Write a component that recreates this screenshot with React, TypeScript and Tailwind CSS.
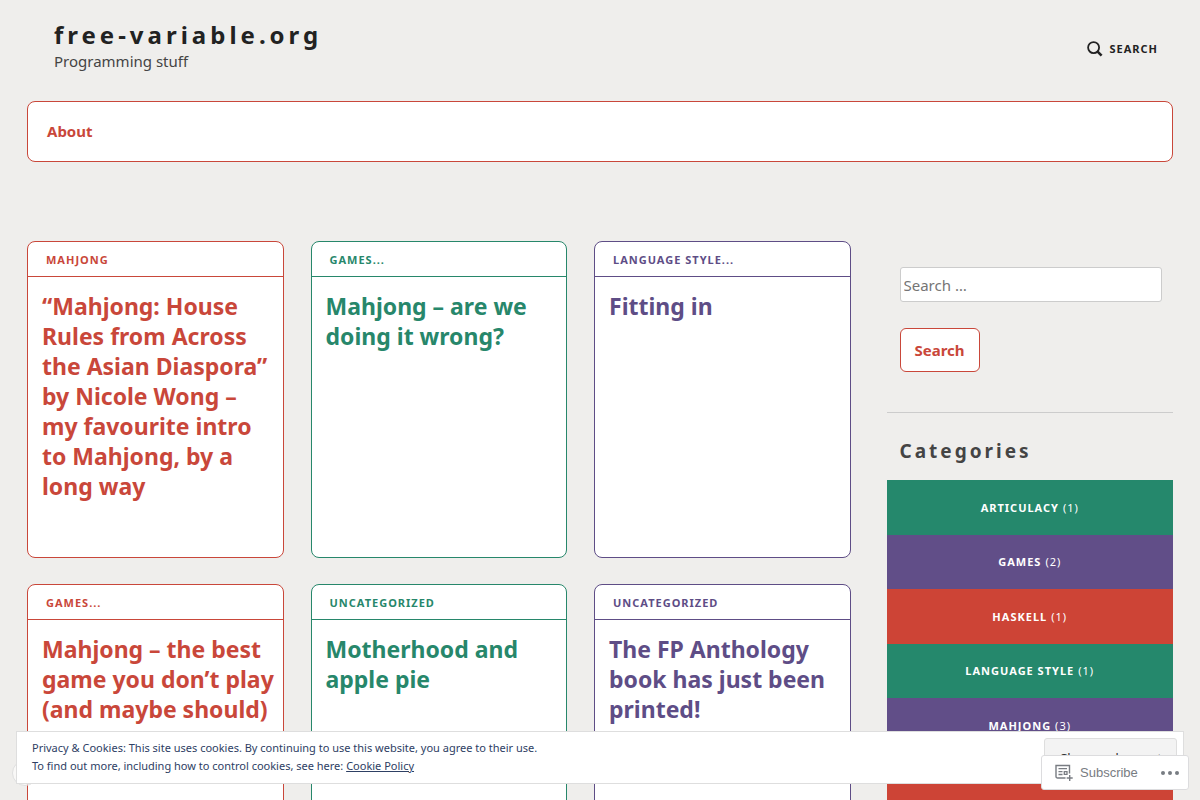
import clsx from 'clsx';

type Tone = 'red' | 'green' | 'purple';

const textTone: Record<Tone, string> = {
  red: 'text-[#c9473a]',
  green: 'text-[#27876b]',
  purple: 'text-[#5e4d86]',
};

const borderTone: Record<Tone, string> = {
  red: 'border-[#c9473a]',
  green: 'border-[#27876b]',
  purple: 'border-[#5e4d86]',
};

const fillTone: Record<Tone, string> = {
  red: 'bg-[#cd4436]',
  green: 'bg-[#25886c]',
  purple: 'bg-[#614e88]',
};

const posts: { category: string; title: string; tone: Tone }[] = [
  {
    category: 'Mahjong',
    title: '“Mahjong: House Rules from Across the Asian Diaspora” by Nicole Wong – my favourite intro to Mahjong, by a long way',
    tone: 'red',
  },
  { category: 'Games...', title: 'Mahjong – are we doing it wrong?', tone: 'green' },
  { category: 'Language Style...', title: 'Fitting in', tone: 'purple' },
  { category: 'Games...', title: 'Mahjong – the best game you don’t play (and maybe should)', tone: 'red' },
  { category: 'Uncategorized', title: 'Motherhood and apple pie', tone: 'green' },
  { category: 'Uncategorized', title: 'The FP Anthology book has just been printed!', tone: 'purple' },
];

const categories: { name: string; count: number; tone: Tone }[] = [
  { name: 'Articulacy', count: 1, tone: 'green' },
  { name: 'Games', count: 2, tone: 'purple' },
  { name: 'Haskell', count: 1, tone: 'red' },
  { name: 'Language Style', count: 1, tone: 'green' },
  { name: 'Mahjong', count: 3, tone: 'purple' },
  { name: 'Uncategorized', count: 9, tone: 'red' },
];

function SearchIcon() {
  return (
    <svg width="16" height="16" viewBox="0 0 16 16" fill="none" stroke="currentColor" aria-hidden="true">
      <circle cx="6.6" cy="6.6" r="5.5" strokeWidth="1.8" />
      <path d="M10.6 10.6l4 4" strokeWidth="2.6" />
    </svg>
  );
}

function SubscribeIcon() {
  return (
    <svg width="18" height="17" viewBox="0 0 18 17" fill="none" stroke="currentColor" aria-hidden="true">
      <path d="M10.5 14H2.6A1.6 1.6 0 0 1 1 12.4V1.5h13.5v8" strokeWidth="1.4" />
      <path d="M3.5 4.6H12M3.5 7.6h4M3.5 10.5h4" strokeWidth="1.3" />
      <path d="M9.3 7.7H12v2.7H9.3z" strokeWidth="1.3" />
      <path d="M14.7 11v6M11.7 14h6" strokeWidth="1.4" />
    </svg>
  );
}

function PostCard({ category, title, tone }: { category: string; title: string; tone: Tone }) {
  return (
    <article className={clsx('min-h-[317px] rounded-lg border bg-white', textTone[tone], borderTone[tone])}>
      <div className={clsx('flex h-[35px] items-center border-b px-[18px] pt-[2px]', borderTone[tone])}>
        <a href="#" className="text-[11px] font-bold uppercase tracking-[1px]">{category}</a>
      </div>
      <h2 className="py-[14px] pr-[7px] pl-[14px] text-[23px] leading-[30px] font-bold">
        <a href="#">{title}</a>
      </h2>
    </article>
  );
}

function Sidebar() {
  return (
    <aside className="w-1/4 shrink-0">
      <form className="border-b border-[#cccccc] pt-[26px] pr-[11px] pb-10 pl-[13px]" onSubmit={(e) => e.preventDefault()}>
        <input
          type="search"
          aria-label="Search for"
          placeholder="Search …"
          className="mb-[26px] block h-[35px] w-full rounded-[3px] border border-[#cccccc] bg-white px-[3px] text-[15px] placeholder:text-[#757575]"
        />
        <button className="h-11 rounded-md border border-[#c9473a] bg-white px-[14px] text-[15px] font-bold text-[#c9473a]">
          Search
        </button>
      </form>
      <h2 className="px-[13px] pt-[23px] pb-[14px] text-[19px] leading-[30px] font-bold tracking-[3px] text-[#444444]">
        Categories
      </h2>
      <ul className="flex h-[327px] flex-col text-[11px] tracking-[1px] text-white">
        {categories.map((c) => (
          <li key={c.name} className={clsx('flex flex-1 items-center justify-center gap-1 pt-px', fillTone[c.tone])}>
            <a href="#" className="font-bold uppercase">{c.name}</a>
            <span>({c.count})</span>
          </li>
        ))}
      </ul>
    </aside>
  );
}

function CookieBanner() {
  return (
    <div className="fixed inset-x-4 bottom-4 flex h-[53px] items-start justify-between border border-[#dedede] bg-white pt-[6px] pr-[6px] pl-[15px] text-[#2e4064]">
      <p className="pt-[1px] text-[11px] leading-[18px]">
        Privacy &amp; Cookies: This site uses cookies. By continuing to use this website, you agree to their use.
        <br />
        To find out more, including how to control cookies, see here:{' '}
        <a href="#" className="underline">Cookie Policy</a>
      </p>
      <button className="h-[38px] w-[133px] rounded-[3px] border border-[#dedede] bg-[#f3f3f3] pt-1 text-[13px] text-[#333333]">
        Close and accept
      </button>
    </div>
  );
}

function ActionBar() {
  return (
    <div className="fixed right-[11px] bottom-[10px] flex h-[35px] w-[148px] items-center justify-between rounded-[3px] border border-[#dcdcde] bg-white pr-[9px] pl-[13px] font-['Liberation_Sans',Arial,sans-serif] text-[13px] text-[#787c82]">
      <button className="flex items-center gap-[7px]">
        <SubscribeIcon />
        Subscribe
      </button>
      <button aria-label="More" className="flex gap-[3px]">
        <span className="size-1 rounded-full bg-current" />
        <span className="size-1 rounded-full bg-current" />
        <span className="size-1 rounded-full bg-current" />
      </button>
    </div>
  );
}

export default function App() {
  return (
    <div className="min-h-screen bg-[#efeeec] px-[27px] font-['Noto_Sans',sans-serif] text-[#444444]">
      <header className="flex items-start justify-between pt-[21px] pr-[15px] pl-[27px]">
        <div>
          <h1 className="text-[24px] leading-7 font-bold tracking-[4px] text-[#222222]">
            <a href="#">free-variable.org</a>
          </h1>
          <p className="text-[15px] leading-6">Programming stuff</p>
        </div>
        <button className="mt-[18px] flex items-center gap-[6px] text-[11px] leading-5 font-bold tracking-[1px] text-[#222222] uppercase">
          <SearchIcon />
          Search
        </button>
      </header>

      <nav className="mt-7 flex h-[61px] items-center rounded-lg border border-[#c9473a] bg-white px-[19px]">
        <a href="#" className="text-[15px] font-bold text-[#c9473a]">About</a>
      </nav>

      <div className="mt-[79px] flex gap-9 pb-20">
        <main className="grid min-w-0 flex-1 grid-cols-3 content-start gap-x-[27px] gap-y-[26px]">
          {posts.map((post) => (
            <PostCard key={post.title} {...post} />
          ))}
        </main>
        <Sidebar />
      </div>

      <div className="fixed bottom-[14px] left-3 size-[26px] rounded-full border border-[#dedede] bg-white/60" />
      <CookieBanner />
      <ActionBar />
    </div>
  );
}
